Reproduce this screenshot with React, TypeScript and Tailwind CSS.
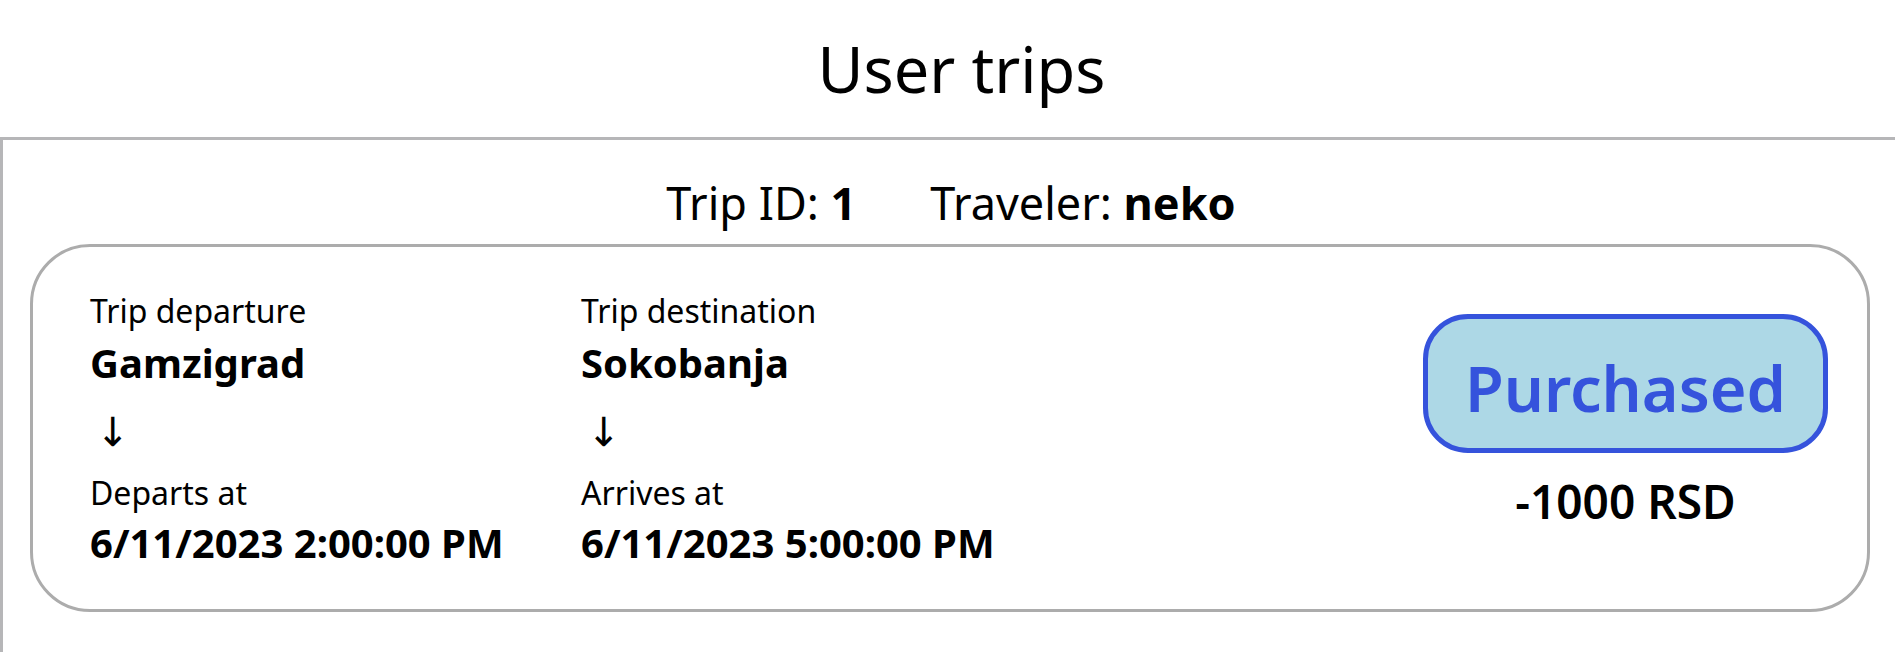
import React from "react";

type ColProps = {
  label1: string;
  value1: string;
  label2: string;
  value2: string;
  className?: string;
};

function Column({ label1, value1, label2, value2, className }: ColProps) {
  return (
    <div className={"flex flex-col pt-[44px] " + (className ?? "")}>
      <div className="text-[32px] leading-[40px]">{label1}</div>
      <div className="mt-[8px] text-[40px] leading-[48px] font-bold">{value1}</div>
      <div className="h-[86px] flex items-center pl-[6px] pt-[4px]">
        <span className="font-['DejaVu_Sans',sans-serif] text-[40px] leading-none">↓</span>
      </div>
      <div className="text-[32px] leading-[40px]">{label2}</div>
      <div className="mt-[6px] text-[40px] leading-[48px] font-bold whitespace-nowrap">{value2}</div>
    </div>
  );
}

export default function App() {
  return (
    <div className="min-h-[658px] w-full bg-white text-black font-['Noto_Sans',sans-serif] overflow-hidden">
      <div className="h-[137px] pt-[29px] pl-[28px] text-center">
        <h1 className="text-[63px] leading-[80px] font-normal">User trips</h1>
      </div>
      <div className="border-t-[3px] border-l-[3px] border-[#b6b6b8] pb-[40px]">
        <div className="pt-[38px] pl-[4px] flex justify-center text-[45px] leading-[50px] whitespace-pre">
          <span>
            Trip ID: <span className="font-bold">1</span>
          </span>
          <span className="ml-[74px]">
            Traveler: <span className="font-bold">neko</span>
          </span>
        </div>
        <div className="mt-[16px] ml-[27px] mr-[25px] h-[368px] border-[3px] border-[#acacac] rounded-[60px] flex">
          <Column
            label1="Trip departure"
            value1="Gamzigrad"
            label2="Departs at"
            value2="6/11/2023 2:00:00 PM"
            className="ml-[57px] w-[491px]"
          />
          <Column
            label1="Trip destination"
            value1="Sokobanja"
            label2="Arrives at"
            value2="6/11/2023 5:00:00 PM"
          />
          <div className="ml-auto mr-[39px] mt-[67px] flex flex-col items-center">
            <div className="w-[405px] h-[139px] border-[5px] border-[#3553dc] bg-[#add8e6] rounded-[45px] text-center text-[#3553dc] text-[63px] leading-[72px] font-semibold pt-[33px]">
              Purchased
            </div>
            <div className="mt-[21px] text-[46px] leading-[54px] font-semibold">-1000 RSD</div>
          </div>
        </div>
      </div>
    </div>
  );
}
